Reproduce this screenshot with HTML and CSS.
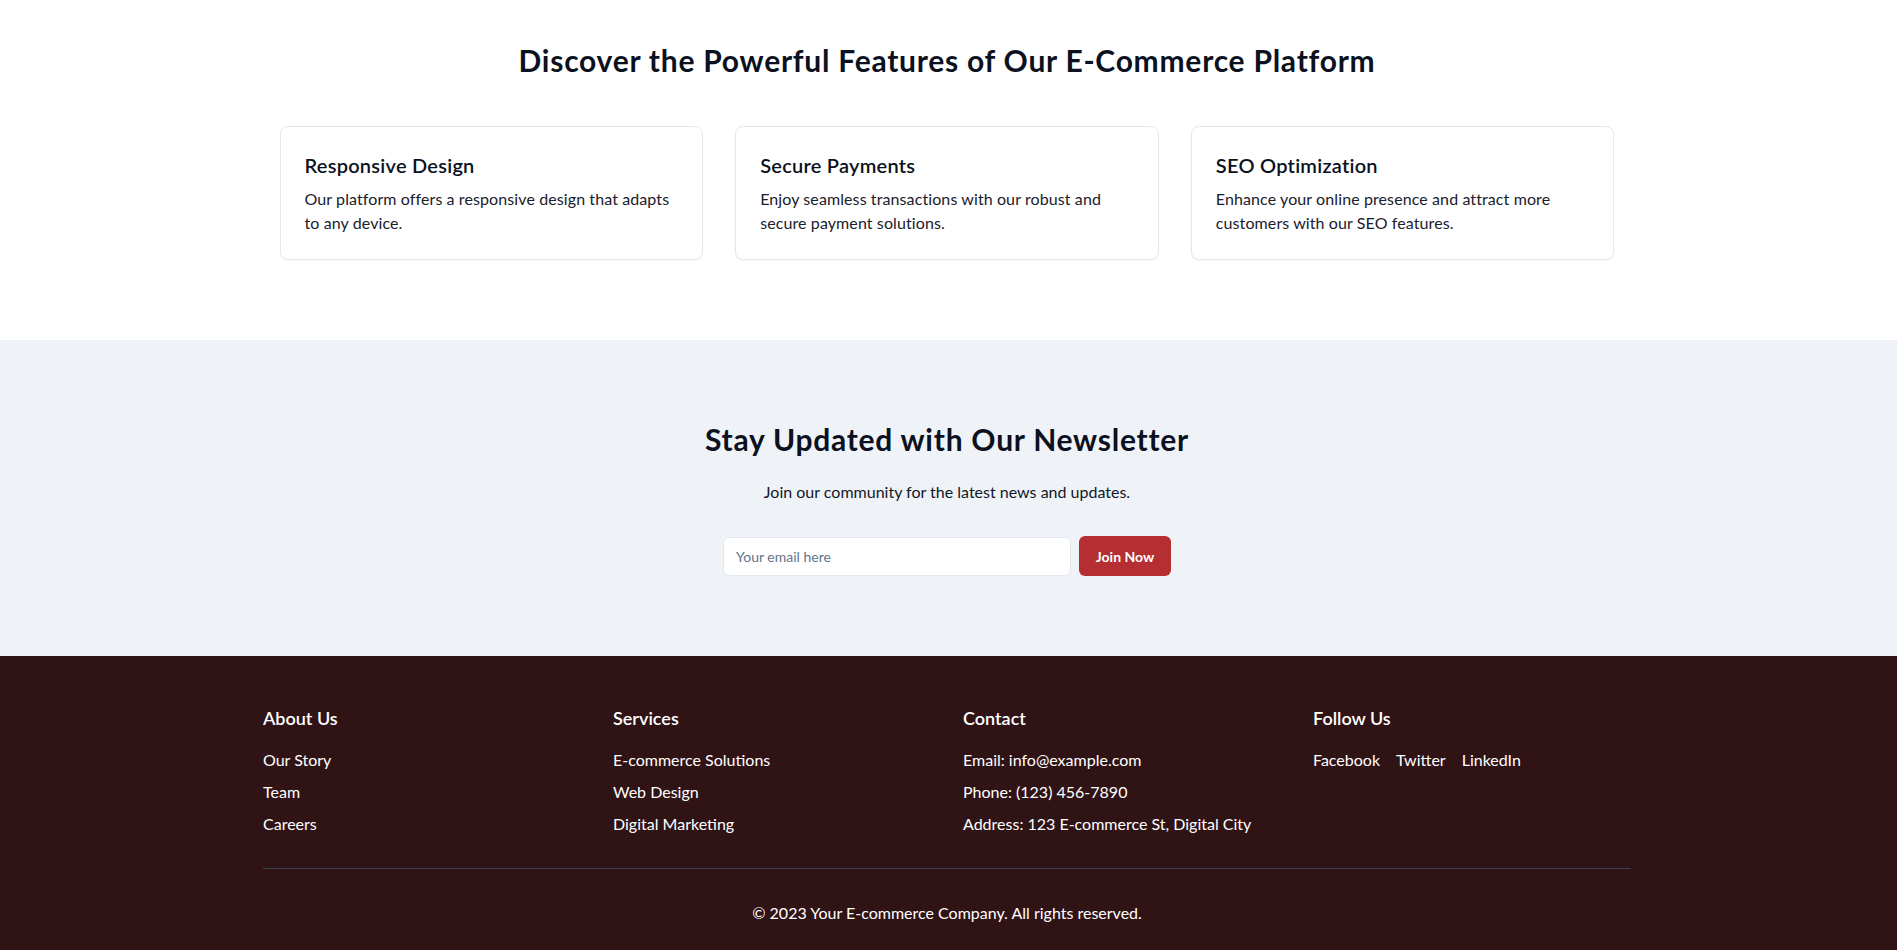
FILE: index.html
```html
<!DOCTYPE html>
<html lang="en">
<head>
<meta charset="utf-8">
<title>E-Commerce Platform</title>
<link rel="stylesheet" href="styles.css">
</head>
<body>
<section class="features">
  <h2 class="section-title">Discover the Powerful Features of Our E-Commerce Platform</h2>
  <div class="cards">
    <div class="card">
      <h3 class="card-title">Responsive Design</h3>
      <p class="card-text">Our platform offers a responsive design that adapts to any device.</p>
    </div>
    <div class="card">
      <h3 class="card-title">Secure Payments</h3>
      <p class="card-text">Enjoy seamless transactions with our robust and secure payment solutions.</p>
    </div>
    <div class="card">
      <h3 class="card-title">SEO Optimization</h3>
      <p class="card-text">Enhance your online presence and attract more customers with our SEO features.</p>
    </div>
  </div>
</section>

<section class="newsletter">
  <h2 class="section-title newsletter-title">Stay Updated with Our Newsletter</h2>
  <p class="newsletter-text">Join our community for the latest news and updates.</p>
  <form class="newsletter-form">
    <input class="email-input" type="email" placeholder="Your email here">
    <button class="join-btn" type="button">Join Now</button>
  </form>
</section>

<footer class="footer">
  <div class="footer-inner">
    <div class="footer-cols">
      <div class="footer-col">
        <h4 class="footer-heading">About Us</h4>
        <ul class="footer-list">
          <li><a href="#">Our Story</a></li>
          <li><a href="#">Team</a></li>
          <li><a href="#">Careers</a></li>
        </ul>
      </div>
      <div class="footer-col">
        <h4 class="footer-heading">Services</h4>
        <ul class="footer-list">
          <li><a href="#">E-commerce Solutions</a></li>
          <li><a href="#">Web Design</a></li>
          <li><a href="#">Digital Marketing</a></li>
        </ul>
      </div>
      <div class="footer-col">
        <h4 class="footer-heading">Contact</h4>
        <ul class="footer-list">
          <li>Email: info@example.com</li>
          <li>Phone: (123) 456-7890</li>
          <li>Address: 123 E-commerce St, Digital City</li>
        </ul>
      </div>
      <div class="footer-col">
        <h4 class="footer-heading">Follow Us</h4>
        <div class="social">
          <a href="#">Facebook</a>
          <a href="#">Twitter</a>
          <a href="#">LinkedIn</a>
        </div>
      </div>
    </div>
    <div class="footer-bottom">
      <p>&copy; 2023 Your E-commerce Company. All rights reserved.</p>
    </div>
  </div>
</footer>
</body>
</html>
```

FILE: styles.css
```css
* {
  box-sizing: border-box;
}

html, body {
  margin: 0;
  padding: 0;
}

body {
  font-family: "Segoe UI", Lato, "Noto Sans", sans-serif;
  color: #111827;
  background: #ffffff;
  font-size: 16px;
  line-height: 24px;
}

h2, h3, h4, p, ul {
  margin: 0;
  padding: 0;
}

.features {
  padding: 42px 3px 80px 0;
  background: #ffffff;
}

.section-title {
  font-size: 30px;
  line-height: 36px;
  font-weight: 700;
  color: #0b1120;
  text-align: center;
  letter-spacing: 0.75px;
}

.features .section-title {
  margin-bottom: 48px;
}

.cards {
  width: 1335px;
  margin: 0 auto;
  display: grid;
  grid-template-columns: repeat(3, 1fr);
  gap: 32px;
}

.card {
  border: 1px solid #e2e8f0;
  border-radius: 8px;
  padding: 24px;
  background: #ffffff;
  box-shadow: 0 1px 2px rgba(15, 23, 42, 0.04);
}

.card-title {
  font-size: 20px;
  line-height: 28px;
  font-weight: 600;
  color: #0b1120;
  margin-bottom: 8px;
  letter-spacing: 0.25px;
}

.card-text {
  font-size: 16px;
  line-height: 24px;
  color: #1a202c;
  letter-spacing: 0.1px;
}

.newsletter {
  background: #eff3f8;
  padding: 81px 3px 80px 0;
  display: flex;
  flex-direction: column;
  align-items: center;
}

.newsletter-title {
  margin-bottom: 23px;
}

.newsletter-text {
  font-size: 16px;
  line-height: 24px;
  color: #111827;
  margin-bottom: 32px;
}

.newsletter-form {
  display: flex;
  gap: 8px;
  margin: 0;
}

.email-input {
  width: 348px;
  height: 39px;
  margin-top: 1px;
  padding: 0 12px;
  border: 1px solid #e2e8f0;
  border-radius: 6px;
  background: #ffffff;
  font-family: inherit;
  font-size: 14px;
  color: #111827;
  outline: none;
}

.email-input::placeholder {
  color: #64748b;
}

.join-btn {
  width: 92px;
  height: 40px;
  border: none;
  border-radius: 6px;
  background: #b42e32;
  color: #ffffff;
  font-family: inherit;
  font-size: 14px;
  font-weight: 700;
  cursor: pointer;
}

.footer {
  background: #301315;
  color: #ffffff;
  padding: 48px 3px 48px 0;
}

.footer-inner {
  width: 1368px;
  margin: 0 auto;
}

.footer-cols {
  display: grid;
  grid-template-columns: repeat(4, 1fr);
  gap: 32px;
}

.footer-heading {
  font-size: 18px;
  line-height: 28px;
  font-weight: 600;
  margin-bottom: 16px;
  color: #ffffff;
}

.footer-list {
  list-style: none;
  display: flex;
  flex-direction: column;
  gap: 8px;
}

.footer-list li {
  font-size: 16px;
  line-height: 24px;
  color: #ffffff;
}

.footer a {
  color: #ffffff;
  text-decoration: none;
}

.social {
  display: flex;
  gap: 16px;
  font-size: 16px;
  line-height: 24px;
}

.footer-bottom {
  margin-top: 32px;
  border-top: 1px solid #374151;
  padding-top: 32px;
  text-align: center;
  font-size: 16px;
  line-height: 24px;
}
```
